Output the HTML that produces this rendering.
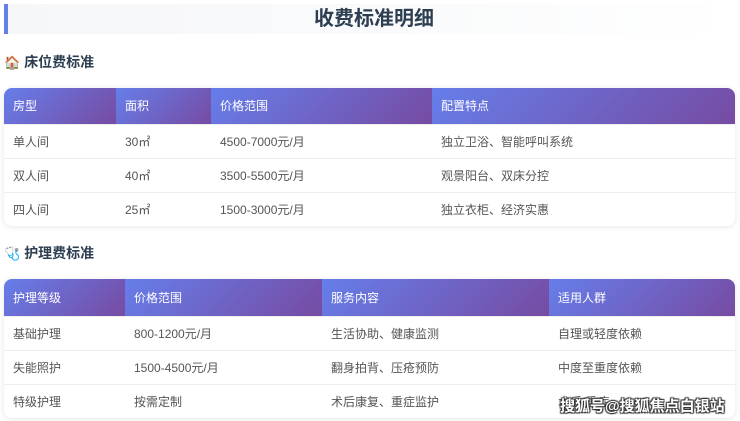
<!DOCTYPE html><html><head><meta charset="utf-8"><style>
*{margin:0;padding:0;box-sizing:border-box}
body{width:740px;height:421px;overflow:hidden;background:#fff;font-family:"Liberation Sans","Noto Sans CJK SC",sans-serif;position:relative}
.title{position:absolute;left:4px;top:4px;width:732px;height:30px;border-left:4px solid #667eea;background:linear-gradient(90deg,#f6f7f9,#fafbfc 60%,#fff);}
.title span{position:absolute;left:4px;right:0;text-align:center;top:1px;font-size:20px;font-weight:bold;color:#2c3e50;line-height:28px}
h3{position:absolute;left:4px;font-size:14px;font-weight:bold;color:#2c3e50;line-height:18px}
h3 i{font-style:normal;font-size:13px;margin-right:4px}
table{position:absolute;left:4px;width:731px;border-collapse:collapse;border-radius:8px;overflow:hidden;box-shadow:0 1px 6px rgba(0,0,0,.1);font-size:12px}
th{background:linear-gradient(135deg,#667eea,#764ba2);color:#fff;font-weight:normal;text-align:left;padding-left:9px;height:36px}
td{color:#555;padding-left:9px;height:34px;border-top:1px solid #eee;background:#fff}
.wm{position:absolute;left:560px;top:395px;font-size:15px;color:#fff;font-weight:bold;text-shadow:0 0 1px #333,1px 1px 1px #333,-1px -1px 1px #333,1px -1px 1px #333,-1px 1px 1px #333}
</style></head><body>
<div class="title"><span>收费标准明细</span></div>
<h3 style="top:53px"><i>🏠</i>床位费标准</h3>
<table style="top:88px"><tr><th style="width:112px">房型</th><th style="width:95px">面积</th><th style="width:221px">价格范围</th><th>配置特点</th></tr>
<tr><td>单人间</td><td>30㎡</td><td>4500-7000元/月</td><td>独立卫浴、智能呼叫系统</td></tr>
<tr><td>双人间</td><td>40㎡</td><td>3500-5500元/月</td><td>观景阳台、双床分控</td></tr>
<tr><td>四人间</td><td>25㎡</td><td>1500-3000元/月</td><td>独立衣柜、经济实惠</td></tr></table>
<h3 style="top:244px"><i>🩺</i>护理费标准</h3>
<table style="top:279px"><tr><th style="width:121px;height:37px">护理等级</th><th style="width:197px">价格范围</th><th style="width:227px">服务内容</th><th>适用人群</th></tr>
<tr><td>基础护理</td><td>800-1200元/月</td><td>生活协助、健康监测</td><td>自理或轻度依赖</td></tr>
<tr><td>失能照护</td><td>1500-4500元/月</td><td>翻身拍背、压疮预防</td><td>中度至重度依赖</td></tr>
<tr><td>特级护理</td><td>按需定制</td><td>术后康复、重症监护</td><td>术后/重症</td></tr></table>
<div class="wm">搜狐号@搜狐焦点白银站</div>
</body></html>
